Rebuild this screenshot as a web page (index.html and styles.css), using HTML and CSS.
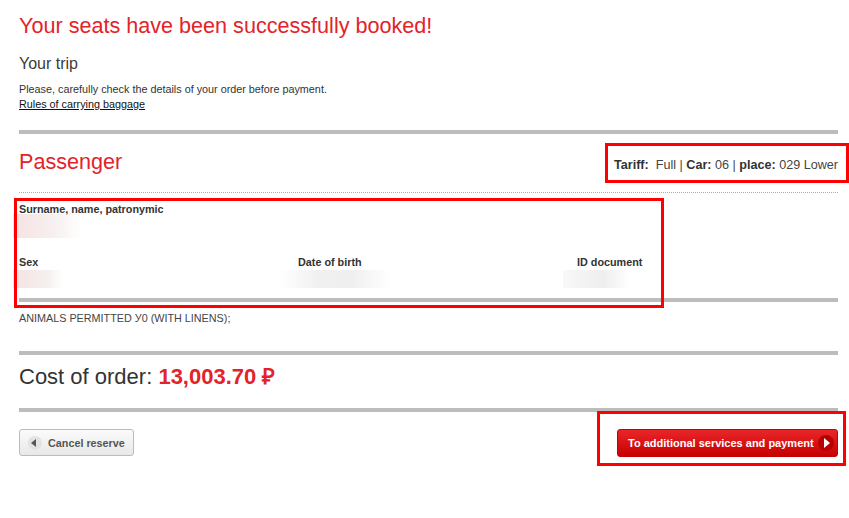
FILE: index.html
```html
<!DOCTYPE html>
<html>
   <head>
      <meta charset="UTF-8">
      <meta name="viewport" content="width=device-width, initial-scale=1.0"/>
      <title>Booking confirmed</title>
      <link rel="stylesheet" href="styles.css">
   </head>
   <body>
      <div class="page">
         <h1 class="title">Your seats have been successfully booked!</h1>

         <h2 class="trip">Your trip</h2>
         <p class="note">Please, carefully check the details of your order before payment.</p>
         <a class="rules" href="#">Rules of carrying baggage</a>

         <div class="bar bar-first"></div>

         <div class="passenger-head">
            <h2 class="section-title">Passenger</h2>
            <div class="tariff">
               <b>Tariff:</b>&nbsp; Full | <b>Car:</b> 06 | <b>place:</b> 029 Lower
            </div>
         </div>
         <div class="dotted"></div>

         <div class="details">
            <div class="label">Surname, name, patronymic</div>
            <div class="blur blur-name"></div>

            <div class="fields">
               <div class="field">
                  <div class="label">Sex</div>
                  <div class="blur blur-sex"></div>
               </div>
               <div class="field">
                  <div class="label">Date of birth</div>
                  <div class="blur blur-dob"></div>
               </div>
               <div class="field">
                  <div class="label">ID document</div>
                  <div class="blur blur-id"></div>
               </div>
            </div>
         </div>

         <div class="bar bar-details"></div>
         <p class="services">ANIMALS PERMITTED У0 (WITH LINENS);</p>

         <div class="bar bar-services"></div>
         <div class="cost">Cost of order: <span class="amount">13,003.70 ₽</span></div>
         <div class="bar bar-cost"></div>

         <div class="actions">
            <button class="btn btn-cancel"><span class="btn-icon icon-back"></span>Cancel reserve</button>
            <button class="btn btn-next">To additional services and payment<span class="btn-icon icon-next"></span></button>
         </div>
      </div>

      <div class="mark mark-tariff"></div>
      <div class="mark mark-details"></div>
      <div class="mark mark-next"></div>
   </body>
</html>
```

FILE: styles.css
```css
*
{
   box-sizing: border-box;
}

body
{
   margin: 0;
   font-family: "Liberation Sans", Arial, sans-serif;
   color: #333333;
   background: #ffffff;
}

.page
{
   width: 838px;
   padding-left: 19px;
}

.title
{
   margin: 13px 0 0;
   font-size: 21.6px;
   line-height: 26px;
   font-weight: normal;
   color: #e3232a;
}

.trip
{
   margin: 15px 0 0;
   font-size: 16px;
   line-height: 20px;
   font-weight: normal;
   color: #3c3c3c;
}

.note
{
   margin: 8px 0 0;
   font-size: 10.8px;
   line-height: 15px;
}

.rules
{
   display: block;
   font-size: 10.8px;
   line-height: 15px;
   color: #111111;
   text-decoration: underline;
}

.bar
{
   height: 4px;
   background: #bcbcbc;
}

.bar-first
{
   margin-top: 18px;
}

.passenger-head
{
   display: flex;
   justify-content: space-between;
   align-items: baseline;
   margin-top: 15px;
}

.section-title
{
   margin: 0;
   font-size: 21.6px;
   line-height: 26px;
   font-weight: normal;
   color: #e3232a;
}

.tariff
{
   font-size: 12.6px;
   line-height: 16px;
   color: #444444;
}

.tariff b
{
   color: #333333;
}

.dotted
{
   margin-top: 17px;
   border-top: 1px dotted #aaaaaa;
}

.details
{
   padding-top: 9px;
}

.label
{
   font-size: 10.8px;
   line-height: 14px;
   font-weight: bold;
   color: #333333;
}

.blur
{
   margin-left: -6px;
}

.blur-name
{
   width: 69px;
   height: 24px;
   margin-top: -2px;
   background: linear-gradient(to right, #f6e2e2, #f7f0f0 60%, #ffffff);
}

.fields
{
   display: grid;
   grid-template-columns: 279px 279px 80px;
   margin-top: 17px;
}

.blur-sex
{
   width: 50px;
   height: 18px;
   margin-top: 1px;
   background: linear-gradient(to right, #f6e2e2, #f5f0f0 70%, #ffffff);
}

.blur-dob
{
   width: 110px;
   height: 18px;
   margin-top: 1px;
   margin-left: -18px;
   background: linear-gradient(to right, #ffffff, #f0f0f0 35%, #efefef 65%, #ffffff);
}

.blur-id
{
   width: 67px;
   height: 18px;
   margin-top: 1px;
   margin-left: -14px;
   background: linear-gradient(to right, #f8f8f8, #eeeeee 60%, #ffffff);
}

.bar-details
{
   margin-top: 10px;
}

.services
{
   margin: 9px 0 0;
   font-size: 10.8px;
   line-height: 14px;
   color: #444444;
}

.bar-services
{
   margin-top: 26px;
}

.cost
{
   margin-top: 9px;
   font-size: 22px;
   line-height: 26px;
   color: #333333;
}

.amount
{
   font-weight: bold;
   color: #e3232a;
}

.bar-cost
{
   margin-top: 18px;
}

.actions
{
   display: flex;
   justify-content: space-between;
   margin-top: 17px;
}

.btn
{
   display: flex;
   align-items: center;
   height: 28px;
   border-radius: 3px;
   font-family: "Liberation Sans", Arial, sans-serif;
   font-size: 10.8px;
   font-weight: bold;
   white-space: nowrap;
   cursor: pointer;
}

.btn-cancel
{
   width: 115px;
   height: 27px;
   padding: 0 0 0 8px;
   border: 1px solid #bcbcbc;
   background: linear-gradient(#fbfbfb, #e8e8e8);
   color: #555555;
}

.btn-next
{
   width: 221px;
   padding: 0 0 0 10px;
   border: 1px solid #c40000;
   background: linear-gradient(#e8262a, #c70000);
   color: #ffffff;
   font-size: 11px;
}

.btn-icon
{
   position: relative;
   display: inline-block;
   flex-shrink: 0;
   width: 14px;
   height: 14px;
   border-radius: 50%;
}

.icon-back
{
   margin-right: 6px;
   background: #e2e2e2;
}

.icon-back::after
{
   content: "";
   position: absolute;
   left: 3px;
   top: 3px;
   border-top: 4px solid transparent;
   border-bottom: 4px solid transparent;
   border-right: 5px solid #555555;
}

.icon-next
{
   width: 16px;
   height: 16px;
   margin-left: 4px;
   background: #b80000;
}

.icon-next::after
{
   content: "";
   position: absolute;
   left: 6px;
   top: 3px;
   border-top: 5px solid transparent;
   border-bottom: 5px solid transparent;
   border-left: 6px solid #ffffff;
}

.mark
{
   position: absolute;
   border: 3px solid #ff0000;
}

.mark-tariff
{
   left: 605px;
   top: 143px;
   width: 244px;
   height: 40px;
}

.mark-details
{
   left: 14px;
   top: 198px;
   width: 650px;
   height: 110px;
}

.mark-next
{
   left: 597px;
   top: 411px;
   width: 249px;
   height: 55px;
}
```
